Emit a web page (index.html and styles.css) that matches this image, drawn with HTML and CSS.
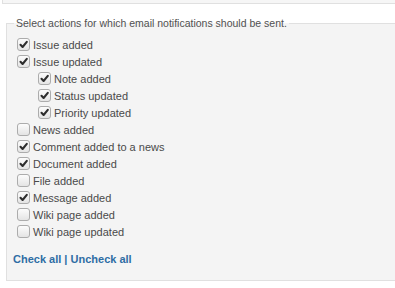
FILE: index.html
```html
<!DOCTYPE html>
<html>
<head>
<meta charset="utf-8">
<link rel="stylesheet" href="styles.css">
</head>
<body>
<div class="prev-box"></div>
<fieldset class="box">
  <legend>Select actions for which email notifications should be sent.</legend>
  <ul class="actions">
    <li><label><span class="cb on"><svg viewBox="0 0 11 11"><path d="M2.5 5.8 L4.6 8 L8.8 2.8"/></svg></span>Issue added</label></li>
    <li><label><span class="cb on"><svg viewBox="0 0 11 11"><path d="M2.5 5.8 L4.6 8 L8.8 2.8"/></svg></span>Issue updated</label>
      <ul class="sub">
        <li><label><span class="cb on"><svg viewBox="0 0 11 11"><path d="M2.5 5.8 L4.6 8 L8.8 2.8"/></svg></span>Note added</label></li>
        <li><label><span class="cb on"><svg viewBox="0 0 11 11"><path d="M2.5 5.8 L4.6 8 L8.8 2.8"/></svg></span>Status updated</label></li>
        <li><label><span class="cb on"><svg viewBox="0 0 11 11"><path d="M2.5 5.8 L4.6 8 L8.8 2.8"/></svg></span>Priority updated</label></li>
      </ul>
    </li>
    <li><label><span class="cb"></span>News added</label></li>
    <li><label><span class="cb on"><svg viewBox="0 0 11 11"><path d="M2.5 5.8 L4.6 8 L8.8 2.8"/></svg></span>Comment added to a news</label></li>
    <li><label><span class="cb on"><svg viewBox="0 0 11 11"><path d="M2.5 5.8 L4.6 8 L8.8 2.8"/></svg></span>Document added</label></li>
    <li><label><span class="cb"></span>File added</label></li>
    <li><label><span class="cb on"><svg viewBox="0 0 11 11"><path d="M2.5 5.8 L4.6 8 L8.8 2.8"/></svg></span>Message added</label></li>
    <li><label><span class="cb"></span>Wiki page added</label></li>
    <li><label><span class="cb"></span>Wiki page updated</label></li>
  </ul>
  <p class="links"><a href="#">Check all</a> | <a href="#">Uncheck all</a></p>
</fieldset>
</body>
</html>
```
FILE: styles.css
```css
html, body {
  margin: 0;
  padding: 0;
  background: #fff;
  font-family: "Liberation Sans", Arial, sans-serif;
  font-size: 11px;
  color: #4a4a4a;
}
.prev-box {
  margin-left: 2px;
  height: 3px;
  background: #f6f6f6;
  border-left: 1px solid #e0e0e0;
  border-bottom: 1px solid #e0e0e0;
}
fieldset.box {
  margin: 13px 0 0 6px;
  padding: 0 0 0 8px;
  border: 1px solid #e0e0e0;
  border-right: none;
  background: #f4f4f4;
  height: 264px;
  box-sizing: border-box;
}
legend {
  padding: 0 2px;
  margin-left: -1px;
  line-height: 13px;
  font-size: 10.5px;
  color: #505050;
}
ul {
  list-style: none;
  margin: 0;
  padding: 0;
}
.actions {
  padding-top: 6px;
  padding-left: 2px;
}
.sub {
  padding-left: 21px;
}
li label {
  display: flex;
  align-items: center;
  height: 17px;
  gap: 3px;
}
.cb {
  width: 11px;
  height: 11px;
  border: 1px solid #acacac;
  border-radius: 3px;
  background: linear-gradient(#fcfcfc, #e4e4e4);
  display: flex;
}
.cb svg {
  width: 11px;
  height: 11px;
  fill: none;
  stroke: #2e2e2e;
  stroke-width: 2.1;
  stroke-linecap: round;
  stroke-linejoin: round;
}
.links {
  margin: 13px 0 0 -2px;
  font-weight: bold;
  color: #2e6da4;
}
.links a {
  color: #2e6da4;
  text-decoration: none;
}
```
